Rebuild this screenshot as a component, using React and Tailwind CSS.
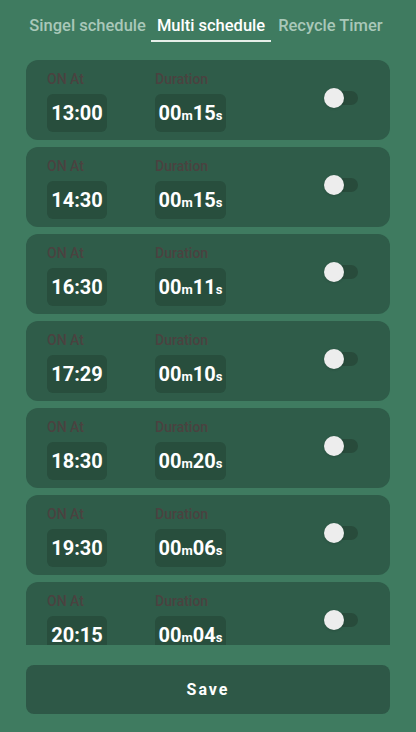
import React, { useState } from "react";

const ROWS = [
  { at: "13:00", m: "00", s: "15" },
  { at: "14:30", m: "00", s: "15" },
  { at: "16:30", m: "00", s: "11" },
  { at: "17:29", m: "00", s: "10" },
  { at: "18:30", m: "00", s: "20" },
  { at: "19:30", m: "00", s: "06" },
  { at: "20:15", m: "00", s: "04" },
];

function Toggle() {
  return (
    <div className="relative w-[34px] h-[20px] flex items-center">
      <div className="absolute left-[10px] right-0 h-[14px] rounded-full bg-[#284b3b]" />
      <div className="absolute left-0 w-[20px] h-[20px] rounded-full bg-[#ededed] shadow" />
    </div>
  );
}

function Row({ row }) {
  return (
    <div className="shrink-0 h-[80px] rounded-xl bg-[#2f5c49] pl-[21px] pr-[32px] pt-[11px] flex">
      <div className="w-[108px] flex flex-col">
        <span className="text-[14px] leading-[17px] text-[#4a4240] font-medium">ON At</span>
        <div className="mt-[6px] w-[60px] h-[38px] rounded-md bg-[#284e3d] flex items-center justify-center text-white text-[20px] font-bold">
          {row.at}
        </div>
      </div>
      <div className="flex flex-col">
        <span className="text-[14px] leading-[17px] text-[#4a4240] font-medium">Duration</span>
        <div className="mt-[6px] w-[71px] h-[38px] rounded-md bg-[#284e3d] flex items-center justify-center text-white font-bold">
          <span className="text-[20px]">{row.m}</span>
          <span className="text-[13px] mt-[6px]">m</span>
          <span className="text-[20px]">{row.s}</span>
          <span className="text-[13px] mt-[6px]">s</span>
        </div>
      </div>
      <div className="ml-auto pt-[17px]">
        <Toggle />
      </div>
    </div>
  );
}

export default function App() {
  const [tab] = useState("multi");
  return (
    <div className="w-[416px] h-[732px] bg-[#3f7b60] flex flex-col font-['Roboto',sans-serif] overflow-hidden">
      <div className="flex justify-center items-start gap-[3px] pt-[14px] h-[60px] text-[16.5px] font-medium">
        <span className="pr-[2px] text-[#a9c8b9]">Singel schedule</span>
        <span className={"px-[6px] text-white border-b-2 border-[#e6efe9] pb-[1px] " + (tab === "multi" ? "" : "")}>
          Multi schedule
        </span>
        <span className="px-[4px] text-[#a9c8b9]">Recycle Timer</span>
      </div>
      <div className="mx-[26px] h-[585px] overflow-hidden flex flex-col gap-[7px]">
        {ROWS.map((r) => (
          <Row key={r.at} row={r} />
        ))}
      </div>
      <div className="px-[26px] pt-[20px]">
        <button className="w-full h-[49px] rounded-lg bg-[#2e5847] text-white font-bold text-[16px] tracking-[2px]">
          Save
        </button>
      </div>
    </div>
  );
}
